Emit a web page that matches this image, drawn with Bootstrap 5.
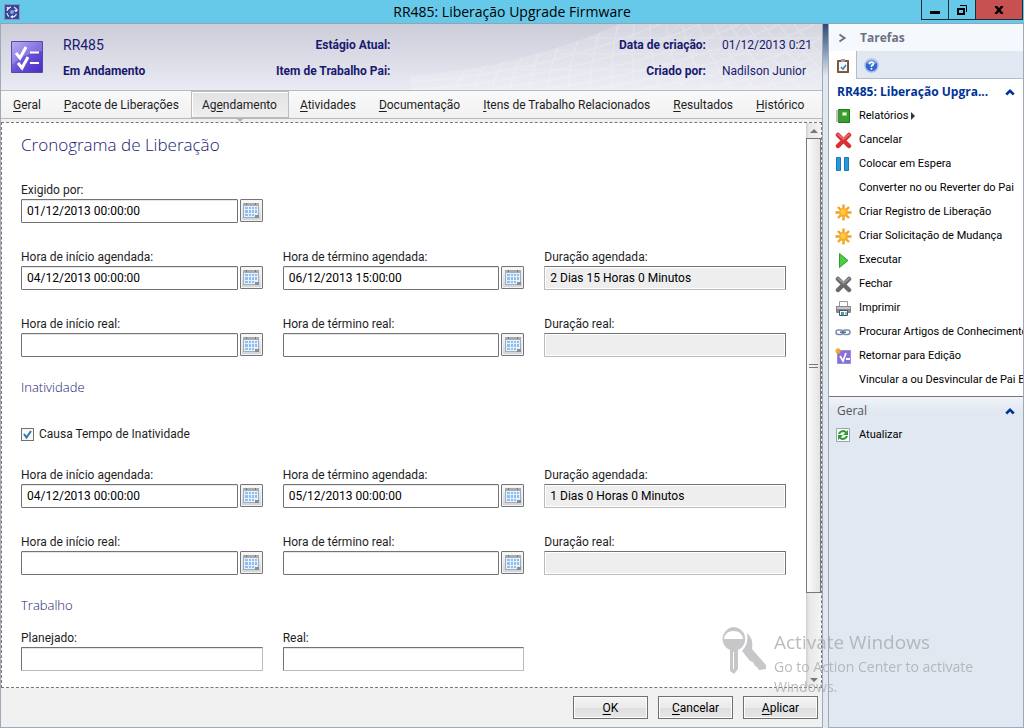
<!DOCTYPE html>
<html lang="pt-BR">
<head>
<meta charset="utf-8">
<meta name="viewport" content="width=device-width, initial-scale=1">
<title>RR485: Liberação Upgrade Firmware</title>
<link href="https://cdn.jsdelivr.net/npm/bootstrap@5.3.0/dist/css/bootstrap.min.css" rel="stylesheet">
<style>
body{font-family:Roboto,"Open Sans",sans-serif;font-size:12px;line-height:16px;color:#1e1e1e;background:#e2e8f1}
u{text-underline-offset:2px}
.titlebar,.formarea h1,.formarea h2,.watermark,.grouptitle,.taskhead{font-family:"Open Sans","Noto Sans",sans-serif}
.titlebar{display:grid;grid-template-columns:1fr auto 1fr;height:24px;background:#66c9ea;border-bottom:1px solid #8fa5b8;color:#000;font-size:14px;line-height:24px}
.winset{padding-right:1px}
.winbtn{border:1px solid #16303a;border-top:0;border-right:0;background:#66c9ea;height:20px;width:27px;padding:0;display:flex;align-items:center;justify-content:center}
.winbtn.close-win{width:48px;background:#c75050;border-right:1px solid #16303a}
.mainpane{border:1px solid #a0a9b8;border-top:0;background:#f0f0f0}
.recordhead{position:relative;height:67px;background:linear-gradient(#cccdd9,#e9eaf3);border-bottom:1px solid #b9b9b9;color:#191970;padding:0 10px}
.recordhead b{font-size:12px;font-weight:700}
.recordhead .mesh{position:absolute;right:0;top:0;height:66px;width:412px}
.headgrid{position:relative;display:grid;grid-template-columns:36px 13fr 13fr 25fr 90px;column-gap:16px;height:100%;align-items:center}
.headgrid .pair{display:grid;row-gap:10px;padding-top:2px}
.recname{font-size:14px}
.tabstrip{height:28px;background:linear-gradient(#f9f9f9,#f1f1f1);border-bottom:1px solid #b9b9b9;padding-left:1px}
.tabstrip .nav-link{color:#1e1e1e;padding:5px 11px 6px 10px;border:1px solid transparent;border-radius:0;white-space:nowrap}
.tabstrip .nav-link.active{position:relative;background:linear-gradient(#e2e2e2,#efefef);border-color:#bcbcbc;box-shadow:inset 1px 1px #fff;color:#1e1e1e}
.tabstrip .nav-link.active::after{content:"";position:absolute;left:50%;bottom:-5px;margin-left:-4px;border:4px solid transparent;border-bottom:0;border-top-color:#b4b4b4}
.sheet{margin-top:3px;border:1px dashed #777;background:#fff}
.formarea{padding:11px 20px 0 19px}
.formarea h1{font-size:17px;line-height:22px;font-weight:300;color:#191970;margin:0 0 26px}
.formarea h2{font-size:13px;line-height:18px;font-weight:300;color:#191970;margin:21px 0}
.fieldgrid{display:grid;grid-template-columns:repeat(3,minmax(0,1fr));gap:26px 20px}
.fieldgrid label{display:block;height:17px}
.checkline{gap:5px;margin:30px 0 25px;height:16px}
.dategroup{gap:2px}
.box{height:24px;border:1px solid #737373;border-radius:1px;background:#fff;padding:0 5px;width:100%;min-width:0;font-size:12px;color:#000;box-shadow:inset 0 1px #e6e6e6}
.box.plain{border-right-color:#bbb;border-bottom-color:#bbb}
.box.locked{background:#eee;border-left-color:#bbb;border-bottom-color:#bbb;box-shadow:inset 0 0 0 1px #fff}
.calbtn{flex:0 0 23px;height:23px;border:1px solid #70767b;border-radius:1px;padding:0;background:linear-gradient(#fafafa,#cdd3d9);box-shadow:inset 0 0 0 1px #f3f3f3;display:flex;align-items:center;justify-content:center}
.tick{appearance:none;width:13px;height:13px;margin:0;border:1px solid #707070;background:#f8f8f8 url("data:image/svg+xml,%3Csvg xmlns='http://www.w3.org/2000/svg' viewBox='0 0 11 11'%3E%3Cpath d='M2 5l2.5 3.5L9 2' fill='none' stroke='%232e78b0' stroke-width='2'/%3E%3C/svg%3E")}
.scroller{width:15px;background:linear-gradient(90deg,#cfcfcf,#e8e8e8 20%,#f3f3f3)}
.scroller .arrow{height:15px}
.scroller .thumb{flex:455 0 0;border:1px solid #777;background:linear-gradient(90deg,#fcfcfc,#e3e3e3)}
.scroller .rest{flex:79 0 0}
.grip{width:9px;height:4px;border:solid #777;border-width:1px 0}
.footbar{height:39px;padding-right:4px;gap:10px}
.dlgbtn{width:75px;height:23px;padding:0;border:1px solid #707070;border-radius:0;background:linear-gradient(#f3f3f3,#ebebeb 50%,#dfdfdf 51%,#e6e6e6);box-shadow:inset 0 0 0 1px #fcfcfc;color:#000;font-size:12px}
.splitter{flex:0 0 5px;background:linear-gradient(#2f4a73,#6b83a6 20px,#e2e8f1 52px)}
.taskpane{flex:0 0 196px;min-width:0;border:1px solid #a0a9b8;border-top:0;background:#e2e8f1;color:#000}
.taskhead{height:27px;background:#f5f8fd;color:#6c7384;font-weight:700;font-size:12px;padding-left:9px;gap:13px}
.panetabs{height:28px;border-bottom:1px solid #b3bcc9}
.panetabs button{width:28px;height:27px;border:0;background:none;padding:0}
.panetabs .on{height:28px;margin-bottom:-1px;background:#fff;border-right:1px solid #b3bcc9}
.grouptitle{height:25px;padding:0 8px;font-size:12px;color:#039;border:0;background:none;width:100%;text-align:left}
.grouptitle.gray{color:#555}
.tasklist{background:#fff;border-bottom:1px solid #777;padding-bottom:4px}
.generalgroup{background:linear-gradient(#f0f4fa,#e2e8f1 14px);padding-top:1px}
.task{height:24px;padding-left:6px;gap:7px;color:#000;text-decoration:none;white-space:nowrap;overflow:hidden;font-size:11px}
.task svg{flex:0 0 17px}
.watermark{position:fixed;left:720px;top:626px;color:#a9abaf;opacity:.8;pointer-events:none;font-weight:400;width:270px}
.watermark strong{display:block;font-size:19px;font-weight:400;line-height:30px;padding-top:1px}
.watermark span{display:block;font-size:14px;line-height:20px}
</style>
</head>
<body class="d-flex flex-column vh-100 overflow-hidden">
<svg width="0" height="0" class="position-absolute" aria-hidden="true">
<defs>
<linearGradient id="gv" x1="0" y1="0" x2="1" y2="1"><stop offset="0" stop-color="#a99cf2"/><stop offset=".5" stop-color="#6a52d8"/><stop offset="1" stop-color="#4a2cc0"/></linearGradient>
<symbol id="cal" viewBox="0 1 16 16"><path d="M0 1h16v15H0z" fill="#a9abad"/><path d="M1 4h14v11H1z" fill="#e6f1fd"/><path d="M2 5h3v2H2zM6 5h2v2H6zM9 5h2v2H9zM12 5h2v2h-2zM2 8h3v3H2zM6 8h2v3H6zM9 8h2v3H9zM12 8h2v3h-2zM2 12h3v2H2zM6 12h2v2H6zM9 12h2v2H9z" fill="#8cbff2"/><path d="M3 1h1v2H3zM12 1h1v2h-1z" fill="#777"/><path d="M12 16v-3h4v3z" fill="#8b8d8f"/></symbol>
<symbol id="star" viewBox="0 0 17 17"><path d="M8.500 .5v16M.5 8.500h16M3 3l11 11M14 3L3 14" stroke="#f3a21f" stroke-width="2.400"/><circle cx="8.500" cy="8.500" r="4.500" fill="#f8b02c"/><circle cx="8" cy="8" r="2.500" fill="#ffcc4d"/></symbol>
<symbol id="cross" viewBox="0 0 17 17"><path d="M3 3l11 11M14 3L3 14" stroke="currentColor" stroke-width="4.500" stroke-linecap="round"/><path d="M2.500 2l6 5 6-5" stroke="#fff" stroke-opacity=".35" stroke-width="1.500" fill="none"/></symbol>
<symbol id="up" viewBox="0 0 8 6"><path d="M1 5l3-3 3 3" fill="none" stroke="#039" stroke-width="2"/></symbol>
<clipPath id="dune"><path d="M0 52C90 44 150 26 210 0H412V66H0z"/></clipPath>
</defs></svg>

<header class="titlebar">
  <div class="ps-1 lh-1 ms-n1"><svg class="mt-1" width="16" height="16" viewBox="0 0 16 16"><path d="M.5.5h15v15H.5z" fill="#34499a" stroke="#8a93b8"/><path d="M3 7a5 5 0 0 1 4-4M10 3a5 5 0 0 1 3 4M12.500 10a5 5 0 0 1-4 3M5 12.500A5 5 0 0 1 3 9" fill="none" stroke="#dfe6fa" stroke-width="1.200"/><path d="M2.500 2.500L6 4 3.500 6zM14 5.500l-2 3L10 6zM9 11v3.500L6 13z" fill="#e8edfb"/><circle cx="8" cy="8" r="2" fill="#8fa1dc"/></svg></div>
  <div>RR485: Liberação Upgrade Firmware</div>
  <div class="d-flex justify-content-end winset">
    <button class="winbtn" aria-label="Minimizar"><svg width="10" height="10"><path d="M0 6h10v3H0z"/></svg></button>
    <button class="winbtn" aria-label="Restaurar"><svg width="10" height="10"><path d="M1 4h6v5H1z" fill="none" stroke="#000" stroke-width="2"/><path d="M3 .5h6.500V7" fill="none" stroke="#000"/></svg></button>
    <button class="winbtn close-win" aria-label="Fechar janela"><svg width="10" height="8"><path d="M1.500 0L8.500 8M8.500 0L1.500 8" stroke="#000" stroke-width="2.500"/></svg></button>
  </div>
</header>

<div class="d-flex flex-grow-1 overflow-hidden">
<main class="mainpane d-flex flex-column flex-grow-1 overflow-hidden">
  <section class="recordhead">
    <svg class="mesh" viewBox="0 0 412 66" preserveAspectRatio="none" fill="none" stroke="#fff" aria-hidden="true">
      <g clip-path="url(#dune)">
      <path d="M0 0H412V66H0z" fill="#fff" stroke="none" opacity=".18"/>
      <g opacity=".2" stroke-width="1.500"><path d="M0 58C100 52 180 30 250 0M0 66C120 58 220 32 290 0M40 70C160 58 260 32 330 0M80 72C200 60 300 32 370 0M120 74C240 60 330 36 405 0M170 74C270 62 350 42 412 14M220 76C310 64 370 50 412 30M270 76C340 66 380 58 412 46"/>
      <path d="M70 30Q50 50 46 66M90 24Q68 46 64 66M108 18Q86 42 82 66M126 14Q104 40 100 66M142 8Q122 36 119 66M158 4Q140 34 138 66M175 0Q159 34 158 66M192 0Q180 34 180 66M208 0Q200 34 202 66M224 0Q220 34 225 66M240 0Q240 34 249 66M256 0Q260 34 273 66M272 0Q280 34 297 66M288 0Q300 34 321 66M304 0Q320 34 345 66M320 0Q340 34 369 66M336 0Q360 34 393 66M352 0Q380 34 412 62M368 0Q390 26 412 46M384 0Q396 16 412 30"/>
      <path d="M200 66L270 0M222 66L292 0M244 66L314 0M266 66L336 0M288 66L358 0M310 66L380 0M332 66L402 0M354 66L412 12M376 66L412 32M180 14H412M150 30H412M110 46H412" stroke-width="1"/></g></g>
    </svg>
    <div class="headgrid">
      <svg width="32" height="32" viewBox="0 0 32 32" role="img" aria-label="Registro de liberação"><path d="M.5.5h31v31H.5z" fill="url(#gv)" stroke="#5a48a8"/><path d="M1 1h30v9Q14 12 1 24z" fill="#fff" opacity=".2"/><path d="M5 12l4 5 6-11M7 22l4 5 6-11" stroke="#fff" stroke-width="3" fill="none"/><path d="M19 11.500h9M19 22h9" stroke="#fff" stroke-width="2"/></svg>
      <div class="pair"><span class="recname">RR485</span><b>Em Andamento</b></div>
      <div class="pair text-end text-nowrap"><b>Estágio Atual:</b><b>Item de Trabalho Pai:</b></div>
      <div class="pair text-end text-nowrap"><b>Data de criação:</b><b>Criado por:</b></div>
      <div class="pair text-nowrap"><span>01/12/2013 0:21</span><span>Nadilson Junior</span></div>
    </div>
  </section>
  <nav class="tabstrip nav flex-nowrap">
    <a class="nav-link" href="#"><u>G</u>eral</a>
    <a class="nav-link" href="#"><u>P</u>acote de Liberações</a>
    <a class="nav-link active" href="#" aria-current="page">Ag<u>e</u>ndamento</a>
    <a class="nav-link" href="#"><u>A</u>tividades</a>
    <a class="nav-link" href="#"><u>D</u>ocumentação</a>
    <a class="nav-link" href="#"><u>I</u>tens de Trabalho Relacionados</a>
    <a class="nav-link" href="#"><u>R</u>esultados</a>
    <a class="nav-link" href="#"><u>H</u>istórico</a>
  </nav>
  <div class="sheet d-flex flex-grow-1 overflow-hidden">
    <form class="formarea flex-grow-1 overflow-hidden">
      <h1>Cronograma de Liberação</h1>
      <div class="fieldgrid">
        <div><label for="f1">Exigido por:</label><div class="d-flex dategroup"><input class="box" id="f1" value="01/12/2013 00:00:00"><button type="button" class="calbtn" aria-label="Calendário"><svg width="16" height="16"><use href="#cal"/></svg></button></div></div>
        <div></div><div></div>
        <div><label for="f2">Hora de início agendada:</label><div class="d-flex dategroup"><input class="box" id="f2" value="04/12/2013 00:00:00"><button type="button" class="calbtn" aria-label="Calendário"><svg width="16" height="16"><use href="#cal"/></svg></button></div></div>
        <div><label for="f3">Hora de término agendada:</label><div class="d-flex dategroup"><input class="box" id="f3" value="06/12/2013 15:00:00"><button type="button" class="calbtn" aria-label="Calendário"><svg width="16" height="16"><use href="#cal"/></svg></button></div></div>
        <div><label for="f4">Duração agendada:</label><input class="box locked" id="f4" readonly value="2 Dias 15 Horas 0 Minutos"></div>
        <div><label for="f5">Hora de início real:</label><div class="d-flex dategroup"><input class="box" id="f5"><button type="button" class="calbtn" aria-label="Calendário"><svg width="16" height="16"><use href="#cal"/></svg></button></div></div>
        <div><label for="f6">Hora de término real:</label><div class="d-flex dategroup"><input class="box" id="f6"><button type="button" class="calbtn" aria-label="Calendário"><svg width="16" height="16"><use href="#cal"/></svg></button></div></div>
        <div><label for="f7">Duração real:</label><input class="box locked" id="f7" readonly></div>
      </div>
      <h2>Inatividade</h2>
      <div class="d-flex align-items-center checkline"><input type="checkbox" class="tick" id="c1" checked><label for="c1">Causa Tempo de Inatividade</label></div>
      <div class="fieldgrid">
        <div><label for="g2">Hora de início agendada:</label><div class="d-flex dategroup"><input class="box" id="g2" value="04/12/2013 00:00:00"><button type="button" class="calbtn" aria-label="Calendário"><svg width="16" height="16"><use href="#cal"/></svg></button></div></div>
        <div><label for="g3">Hora de término agendada:</label><div class="d-flex dategroup"><input class="box" id="g3" value="05/12/2013 00:00:00"><button type="button" class="calbtn" aria-label="Calendário"><svg width="16" height="16"><use href="#cal"/></svg></button></div></div>
        <div><label for="g4">Duração agendada:</label><input class="box locked" id="g4" readonly value="1 Dias 0 Horas 0 Minutos"></div>
        <div><label for="g5">Hora de início real:</label><div class="d-flex dategroup"><input class="box" id="g5"><button type="button" class="calbtn" aria-label="Calendário"><svg width="16" height="16"><use href="#cal"/></svg></button></div></div>
        <div><label for="g6">Hora de término real:</label><div class="d-flex dategroup"><input class="box" id="g6"><button type="button" class="calbtn" aria-label="Calendário"><svg width="16" height="16"><use href="#cal"/></svg></button></div></div>
        <div><label for="g7">Duração real:</label><input class="box locked" id="g7" readonly></div>
      </div>
      <h2 class="mb-3">Trabalho</h2>
      <div class="fieldgrid">
        <div><label for="h1">Planejado:</label><input class="box plain" id="h1"></div>
        <div><label for="h2">Real:</label><input class="box plain" id="h2"></div>
      </div>
    </form>
    <div class="scroller d-flex flex-column" aria-hidden="true">
      <div class="arrow d-flex align-items-center justify-content-center"><svg width="8" height="4"><path d="M0 4l4-4 4 4z" fill="#777"/></svg></div>
      <div class="thumb d-flex align-items-center justify-content-center"><div class="grip"></div></div>
      <div class="rest"></div>
      <div class="arrow d-flex align-items-center justify-content-center"><svg width="8" height="4"><path d="M0 0l4 4 4-4z" fill="#777"/></svg></div>
    </div>
  </div>
  <footer class="footbar d-flex align-items-center justify-content-end">
    <button class="dlgbtn"><u>O</u>K</button>
    <button class="dlgbtn"><u>C</u>ancelar</button>
    <button class="dlgbtn"><u>A</u>plicar</button>
  </footer>
</main>
<div class="splitter"></div>
<aside class="taskpane overflow-hidden">
  <div class="taskhead d-flex align-items-center"><svg width="9" height="10"><path d="M1.500 1.500l5 3.500-5 3.500" fill="none" stroke="#6c7384" stroke-width="2"/></svg>Tarefas</div>
  <div class="panetabs d-flex">
    <button class="on" aria-label="Tarefas"><svg width="12" height="14"><path d="M.5 1.500h11v12H.5z" fill="#8a5a3c" stroke="#7a5236"/><path d="M2 3h8v9H2z" fill="#f2f7fb"/><path d="M4 0h4v3H4z" fill="#99a"/><path d="M4 8l2 2 3-4" fill="none" stroke="#2f86c6" stroke-width="1.500"/></svg></button>
    <button aria-label="Ajuda"><svg width="15" height="15" viewBox="0 0 15 15"><circle cx="7.500" cy="7.500" r="6.500" fill="#2f66d0" stroke="#a8bce8" stroke-width="1.500"/><ellipse cx="7.500" cy="4" rx="5" ry="3" fill="#fff" opacity=".3"/><path d="M5.500 6q0-2 2-2T9.500 5.700Q9.500 7 7.500 8v1M7.500 10v1.800" stroke="#fff" stroke-width="1.600" fill="none"/></svg></button>
  </div>
  <div class="tasklist">
    <button class="grouptitle d-flex align-items-center justify-content-between fw-bold"><span class="text-nowrap">RR485: Liberação Upgra...</span><svg width="10" height="8"><use href="#up"/></svg></button>
    <a class="task d-flex align-items-center" href="#"><svg width="17" height="17"><path d="M3.500 1.500h11v13h-11z" fill="#37a02c" stroke="#1f7a1d"/><path d="M7.500 4.500h4v3h-4z" fill="#fff" stroke="#8fd07d"/><path d="M1 3h3M1 5h3M1 7h3M1 9h3M1 11h3M1 13h3" stroke="#888"/></svg><span>Relatórios <svg width="5" height="8"><path d="M0 0l4 4-4 4z" fill="#333"/></svg></span></a>
    <a class="task d-flex align-items-center" href="#"><svg width="17" height="17" color="#dc2f32"><use href="#cross"/></svg>Cancelar</a>
    <a class="task d-flex align-items-center" href="#"><svg width="17" height="17"><path d="M1.500 1.500h4v13h-4zM9.500 1.500h4v13h-4z" fill="#2b98dc" stroke="#1a76bd"/></svg>Colocar em Espera</a>
    <a class="task d-flex align-items-center" href="#"><svg width="17" height="17"></svg>Converter no ou Reverter do Pai</a>
    <a class="task d-flex align-items-center" href="#"><svg width="17" height="17"><use href="#star"/></svg>Criar Registro de Liberação</a>
    <a class="task d-flex align-items-center" href="#"><svg width="17" height="17"><use href="#star"/></svg>Criar Solicitação de Mudança</a>
    <a class="task d-flex align-items-center" href="#"><svg width="17" height="17"><path d="M4.500 1.500L13 8.500l-8.500 7z" fill="#4fca45" stroke="#2f9f2b"/></svg>Executar</a>
    <a class="task d-flex align-items-center" href="#"><svg width="17" height="17" color="#6a6a6a"><use href="#cross"/></svg>Fechar</a>
    <a class="task d-flex align-items-center" href="#"><svg width="17" height="17"><path d="M4.500 1.500h8v5h-8z" fill="#fff" stroke="#999"/><path d="M1 6h15v6q0 1-1 1H2q-1 0-1-1z" fill="#84878b"/><path d="M2 7h13v2H2z" fill="#c5c8cb"/><path d="M4.500 10.500h8v5h-8z" fill="#fff" stroke="#555"/><path d="M6 12h3v3H6z" fill="#3b9bdc"/><path d="M10 12h2v3h-2z" fill="#8cc"/></svg>Imprimir</a>
    <a class="task d-flex align-items-center" href="#"><svg width="17" height="17"><rect x="1" y="6" width="7" height="4.500" rx="2.200" fill="none" stroke="#7d8da8" stroke-width="1.500"/><rect x="8" y="6" width="7" height="4.500" rx="2.200" fill="none" stroke="#7d8da8" stroke-width="1.500"/><path d="M5 8.200h6" stroke="#5a6c88" stroke-width="1.500"/></svg>Procurar Artigos de Conhecimento</a>
    <a class="task d-flex align-items-center" href="#"><svg width="17" height="17"><path d="M2.500 2.500h13v13h-13z" fill="#8671dc" stroke="#9a8ae0"/><path d="M5 8l3 5 3-8M11 11h4" stroke="#fff" stroke-width="1.800" fill="none"/><path d="M3 0v6M0 3h6M1 1l4 4M5 1L1 5" stroke="#f5a623" stroke-width="1.200"/></svg>Retornar para Edição</a>
    <a class="task d-flex align-items-center" href="#"><svg width="17" height="17"></svg>Vincular a ou Desvincular de Pai E</a>
  </div>
  <div class="generalgroup">
    <button class="grouptitle gray d-flex align-items-center justify-content-between"><span>Geral</span><svg width="10" height="8"><use href="#up"/></svg></button>
    <a class="task d-flex align-items-center" href="#"><svg width="17" height="17"><path d="M1.500 1.500h13v13h-13z" fill="#fff" stroke="#99a3ad"/><path d="M4 7q1-3 5-3l3 2M12 9q-1 3-5 3l-3-2" fill="none" stroke="#2f9a34" stroke-width="2"/><path d="M13 3v5H8zM3 13V8h5z" fill="#2f9a34"/></svg>Atualizar</a>
  </div>
</aside>
</div>
<div class="watermark d-flex"><svg width="46" height="48" viewBox="0 0 46 48" class="flex-shrink-0"><path fill-rule="evenodd" fill="#b9babc" d="M13 1a12 12 0 0 1 5 23v19l-4 5-4-3V24A12 12 0 0 1 13 1zM4 13h19q-1-8-9.500-8T4 13zM13 26v17h1V26z"/><path fill="#b9babc" d="M27 7q7 6 5 16l14 16v4l-7 1-2-3-2-1-2-4-3-1-8-10q7-7 5-18z"/></svg><div class="ms-2 text-nowrap"><strong>Activate Windows</strong><span>Go to Action Center to activate</span><span>Windows.</span></div></div>
<script src="https://cdn.jsdelivr.net/npm/bootstrap@5.3.0/dist/js/bootstrap.bundle.min.js"></script>
</body>
</html>
